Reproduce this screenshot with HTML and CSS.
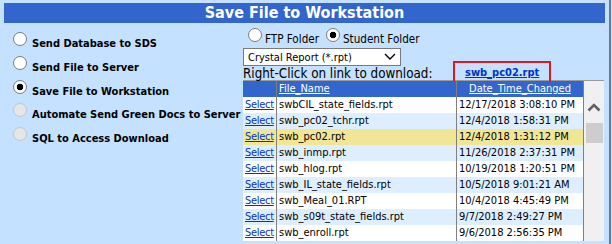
FILE: index.html
```html
<!DOCTYPE html>
<html lang="en">
<head>
    <meta charset="UTF-8">
    <title>Save File to Workstation</title>
    <link rel="stylesheet" href="styles.css">
</head>
<body>

<div class="page">
    <div class="title-bar">Save File to Workstation</div>

    <div class="main">
        <div class="options">
            <div class="opt"><input class="radio" type="radio" name="action" id="act-sds"><label for="act-sds">Send Database to SDS</label></div>
            <div class="opt"><input class="radio" type="radio" name="action" id="act-server"><label for="act-server">Send File to Server</label></div>
            <div class="opt"><input class="radio" type="radio" name="action" id="act-save" checked><label for="act-save">Save File to Workstation</label></div>
            <div class="opt"><input class="radio" type="radio" name="action" id="act-green" disabled><label for="act-green">Automate Send Green Docs to Server</label></div>
            <div class="opt"><input class="radio" type="radio" name="action" id="act-sql" disabled><label for="act-sql">SQL to Access Download</label></div>
        </div>

        <div class="panel">
            <div class="folders">
                <input class="radio" type="radio" name="folder" id="fold-ftp"><label for="fold-ftp">FTP Folder</label>
                <input class="radio" type="radio" name="folder" id="fold-student" checked><label for="fold-student">Student Folder</label>
            </div>

            <div class="filter">
                <select>
                    <option>Crystal Report (*.rpt)</option>
                </select>
                <svg class="chev" width="12" height="7" viewBox="0 0 12 7"><path d="M1 1 L6 6 L11 1" fill="none" stroke="#000" stroke-width="1.4"/></svg>
            </div>

            <div class="hint">
                <span class="hint-text">Right-Click on link to download:</span>
                <span class="picked"><a href="#">swb_pc02.rpt</a></span>
            </div>

            <div class="grid-wrap">
                <table class="files">
                    <colgroup>
                        <col class="c-sel">
                        <col class="c-name">
                        <col class="c-date">
                    </colgroup>
                    <thead>
                        <tr><th></th><th>File_Name</th><th class="when">Date_Time_Changed</th></tr>
                    </thead>
                    <tbody>
                        <tr><td class="sel"><a href="#">Select</a></td><td>swbCIL_state_fields.rpt</td><td>12/17/2018 3:08:10 PM</td></tr>
                        <tr><td class="sel"><a href="#">Select</a></td><td>swb_pc02_tchr.rpt</td><td>12/4/2018 1:58:31 PM</td></tr>
                        <tr class="current"><td class="sel"><a href="#">Select</a></td><td>swb_pc02.rpt</td><td>12/4/2018 1:31:12 PM</td></tr>
                        <tr><td class="sel"><a href="#">Select</a></td><td>swb_inmp.rpt</td><td>11/26/2018 2:37:31 PM</td></tr>
                        <tr><td class="sel"><a href="#">Select</a></td><td>swb_hlog.rpt</td><td>10/19/2018 1:20:51 PM</td></tr>
                        <tr><td class="sel"><a href="#">Select</a></td><td>swb_IL_state_fields.rpt</td><td>10/5/2018 9:01:21 AM</td></tr>
                        <tr><td class="sel"><a href="#">Select</a></td><td>swb_Meal_01.RPT</td><td>10/4/2018 4:45:49 PM</td></tr>
                        <tr><td class="sel"><a href="#">Select</a></td><td>swb_s09t_state_fields.rpt</td><td>9/7/2018 2:49:27 PM</td></tr>
                        <tr><td class="sel"><a href="#">Select</a></td><td>swb_enroll.rpt</td><td>9/6/2018 2:56:35 PM</td></tr>
                    </tbody>
                </table>
                <div class="vscroll">
                    <svg width="14" height="9" viewBox="0 0 14 9"><path d="M1.5 7.5 L7 2 L12.5 7.5" fill="none" stroke="#606060" stroke-width="2.6"/></svg>
                    <div class="thumb"></div>
                </div>
            </div>
        </div>
    </div>
</div>

</body>
</html>
```

FILE: styles.css
```css
body {
    margin: 0;
    background-color: #c4e1ff;
    font-family: "DejaVu Sans Condensed", "Liberation Sans", sans-serif;
    font-size: 11px;
    color: #000000;
    overflow: hidden;
}

.page {
    width: 611px;
    height: 244px;
    box-sizing: border-box;
    padding: 3px 4px 0 4px;
    border-right: 2px solid #6b7a8b;
    overflow: hidden;
}

.title-bar {
    background-color: #3366cc;
    color: #ffffff;
    font-weight: bold;
    font-size: 16px;
    height: 20px;
    line-height: 20px;
    text-align: center;
}

.main {
    display: flex;
}

/* left column: actions */
.options {
    width: 239px;
    flex: none;
    box-sizing: border-box;
    padding: 9px 0 0 4px;
}

.opt {
    display: flex;
    align-items: flex-start;
    height: 23.75px;
    font-weight: bold;
}

.opt label {
    margin-top: 5px;
    line-height: 14px;
    white-space: nowrap;
}

.radio {
    appearance: none;
    -webkit-appearance: none;
    width: 14px;
    height: 14px;
    margin: 0 5px 0 5px;
    box-sizing: border-box;
    border: 1px solid #7b7b7b;
    border-radius: 50%;
    background: #ffffff;
    flex: none;
}

.radio:checked {
    background: radial-gradient(circle, #000000 0 3px, #ffffff 3.6px);
}

.radio:disabled {
    background: #e6e6e6;
    border-color: #c6c6c6;
}

/* right column */
.panel {
    flex: 1;
    padding-top: 5px;
}

.folders {
    display: flex;
    align-items: flex-start;
    height: 20px;
}

.folders label {
    margin-top: 4px;
    line-height: 14px;
    font-size: 11.6px;
}

.folders .radio {
    margin: 0 3px 0 5px;
}

.folders label + .radio {
    margin-left: 7px;
}

.filter {
    position: relative;
    width: 158px;
    height: 18px;
}

.filter select {
    appearance: none;
    -webkit-appearance: none;
    width: 100%;
    height: 100%;
    margin: 0;
    padding: 0 0 0 4px;
    border: 1px solid #7a7a7a;
    border-radius: 0;
    background: #ffffff;
    font: inherit;
    color: #000000;
}

.chev {
    position: absolute;
    right: 5px;
    top: 5px;
}

.hint {
    display: flex;
    align-items: center;
    height: 14px;
}

.hint-text {
    width: 210px;
    flex: none;
    font-size: 13.3px;
    white-space: nowrap;
}

.picked {
    display: flex;
    align-items: center;
    height: 22px;
    box-sizing: border-box;
    padding: 0 10px;
    margin: -5px 0 -3px 0;
    border: 2px solid #e3161b;
}

.picked a {
    color: #0033cc;
    font-weight: bold;
}

/* file grid */
.grid-wrap {
    display: flex;
    width: 361px;
    border-top: 1px solid #9a9a9a;
}

.files {
    width: 341px;
    table-layout: fixed;
    border-collapse: separate;
    border-spacing: 0;
    border-right: 1px solid #808080;
    flex: none;
}

.c-sel { width: 33px; }
.c-name { width: 180px; }
.c-date { width: 127px; }

.files th,
.files td {
    height: 16px;
    line-height: 16px;
    padding: 0 2px;
    text-align: left;
    font-weight: normal;
    white-space: nowrap;
    overflow: hidden;
}

.files th + th,
.files td + td {
    border-left: 1px solid #808080;
}

.files thead th {
    background-color: #3366cc;
    color: #ffffff;
    text-decoration: underline;
}

.files th.when {
    text-align: center;
}

.files td.sel {
    padding-left: 2px;
    padding-right: 0;
}

.files td.sel a {
    color: #0033cc;
    letter-spacing: -0.3px;
}

.files tbody tr {
    background-color: #ffffff;
}

.files tbody tr:nth-child(even) {
    background-color: #ddeeff;
}

.files tbody tr.current {
    background-color: #f0e696;
}

.vscroll {
    width: 20px;
    background-color: #f0f0f0;
    display: flex;
    flex-direction: column;
    align-items: center;
    padding-top: 22px;
}

.thumb {
    width: 17px;
    height: 20px;
    margin-top: 11px;
    background-color: #cdcdcd;
}
```
